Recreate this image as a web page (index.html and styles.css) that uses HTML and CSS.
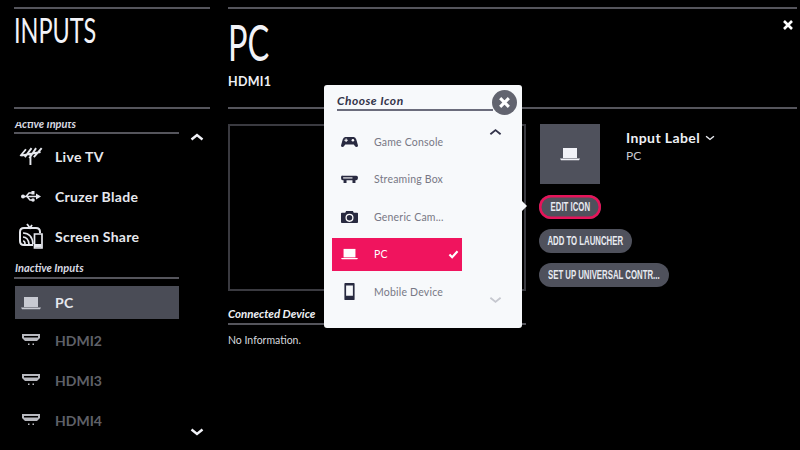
FILE: index.html
```html
<!DOCTYPE html>
<html lang="en">
<head>
    <meta charset="UTF-8">
    <title>Inputs</title>
    <link rel="stylesheet" href="styles.css">
</head>
<body>
    <svg class="defs" width="0" height="0">
        <symbol id="i-laptop" viewBox="0 0 20 14"><path d="M3 1h14v10H3z"/><path d="M0 11.600h20l-1 1.600H1z"/></symbol>
        <symbol id="i-hdmi" viewBox="0 0 20 14"><path d="M1 1h18v4l-3 3H4L1 5z"/><path d="M3 3h14v1.500H3z" fill="#000"/><path d="M7 10.500h1.500V12H7zM11.500 10.500H13V12h-1.500z"/></symbol>
    </svg>

    <aside class="sidebar">
        <header class="side-head">
            <h1>INPUTS</h1>
        </header>
        <div class="side-body">
            <div class="input-list">
                <div class="group-label clipped">Active Inputs</div>
                <div class="row">
                    <svg class="row-icon antenna" viewBox="0 0 21 16"><path d="M1 8 6 2M5 9 11 1M9 10 15 1M13 9 20 1M2 7.500 19 4.500M10 6v10" fill="none" stroke="currentColor" stroke-width="1.700"/></svg>
                    <span>Live TV</span>
                </div>
                <div class="row">
                    <svg class="row-icon usb" viewBox="0 0 20 11"><path d="M1 5.500h15M5 5.500l3-3.500h3M6 5.500l3 3.500h2" fill="none" stroke="currentColor" stroke-width="1.500"/><circle cx="2" cy="5.500" r="2"/><path d="M15 2.500l5 3-5 3z"/><path d="M10.500 0h3v3.500h-3z"/><circle cx="12" cy="9" r="1.800"/></svg>
                    <span>Cruzer Blade</span>
                </div>
                <div class="row">
                    <svg class="row-icon share" viewBox="0 0 24 26"><path d="M8 1l3 4 2-3" fill="none" stroke="currentColor" stroke-width="1.800"/><path d="M14 22H5q-4 0-4-4V9q0-4 4-4h12q4 0 4 4v1" fill="none" stroke="currentColor" stroke-width="2"/><path d="M4 10q9 0 10 11M4 14q5 0 6 7M4 18q2 0 2 3" fill="none" stroke="currentColor" stroke-width="1.700"/><path d="M15.500 11h7.500v14h-7.500z" fill="none" stroke="currentColor" stroke-width="1.700"/><path d="M16 21h6.500v3.500H16z"/></svg>
                    <span>Screen Share</span>
                </div>
                <div class="group-label">Inactive Inputs</div>
                <div class="row selected">
                    <svg class="row-icon"><use href="#i-laptop"/></svg>
                    <span>PC</span>
                </div>
                <div class="row dim">
                    <svg class="row-icon"><use href="#i-hdmi"/></svg>
                    <span>HDMI2</span>
                </div>
                <div class="row dim">
                    <svg class="row-icon"><use href="#i-hdmi"/></svg>
                    <span>HDMI3</span>
                </div>
                <div class="row dim">
                    <svg class="row-icon"><use href="#i-hdmi"/></svg>
                    <span>HDMI4</span>
                </div>
            </div>
            <div class="scroll-col">
                <svg class="chev" viewBox="0 0 14 8"><path d="M1.500 6.500 7 2l5.500 4.500"/></svg>
                <svg class="chev" viewBox="0 0 14 8"><path d="M1.500 1.500 7 6l5.500-4.500"/></svg>
            </div>
        </div>
    </aside>

    <main class="content">
        <header class="content-head">
            <h2>PC</h2>
            <div class="port">HDMI1</div>
        </header>
        <div class="content-body">
            <div class="preview-col">
                <div class="preview"></div>
                <div class="device-label">Connected Device</div>
                <div class="device-info">No Information.</div>
            </div>
            <div class="details">
                <div class="label-row">
                    <div class="thumb"><svg class="thumb-icon"><use href="#i-laptop"/></svg></div>
                    <div class="label-text">
                        <div class="label-title">Input Label <svg class="label-chev" viewBox="0 0 14 8"><path d="M1.500 1.500 7 6l5.500-4.500"/></svg></div>
                        <div class="label-value">PC</div>
                    </div>
                </div>
                <button class="pill pill-edit focused"><span>EDIT ICON</span></button>
                <button class="pill pill-add"><span>ADD TO LAUNCHER</span></button>
                <button class="pill pill-setup"><span>SET UP UNIVERSAL CONTR...</span></button>
            </div>
        </div>
    </main>

    <svg class="close-x" viewBox="0 0 12 12"><path d="M2 2l8 8M10 2l-8 8"/></svg>

    <section class="modal">
        <div class="modal-title">Choose Icon</div>
        <button class="modal-close"><svg viewBox="0 0 12 12"><path d="M2 2l8 8M10 2l-8 8"/></svg></button>
        <div class="modal-body">
            <div class="icon-list">
                <div class="icon-row">
                    <svg class="pick-icon" viewBox="0 0 20 14"><path d="M5 1h10q2 0 3 3l2 7q0 2-2 2-1 0-3-3H5q-2 3-3 3-2 0-2-2l2-7q1-3 3-3z"/><circle cx="14" cy="5" r="1.500" fill="#fff"/><path d="M4 5h4M6 3v4" stroke="#fff" stroke-width="1.200"/></svg>
                    <span>Game Console</span>
                </div>
                <div class="icon-row">
                    <svg class="pick-icon wide" viewBox="0 0 20 9"><path d="M2 0h16q2 0 2 2.500T18 5.500H2Q0 5.500 0 2.500T2 0z"/><path d="M2.500 2h11v1.300h-11z" fill="#fff"/><path d="M3 5h3.500v3.500H3zM13.500 5H17v3.500h-3.500z"/></svg>
                    <span>Streaming Box</span>
                </div>
                <div class="icon-row">
                    <svg class="pick-icon cam" viewBox="0 0 20 16"><path d="M1 3h4l1-2h8l1 2h4q1 0 1 1v10q0 1-1 1H1q-1 0-1-1V4q0-1 1-1z"/><circle cx="10" cy="9" r="4" fill="none" stroke="#fff" stroke-width="1.500"/></svg>
                    <span>Generic Cam...</span>
                </div>
                <div class="icon-row picked">
                    <svg class="pick-icon"><use href="#i-laptop"/></svg>
                    <span>PC</span>
                    <svg class="check" viewBox="0 0 12 10"><path d="M1.500 5 4.500 8 10.500 1.500"/></svg>
                </div>
                <div class="icon-row">
                    <svg class="pick-icon phone" viewBox="0 0 12 20"><path d="M1 0h10q1 0 1 1v18q0 1-1 1H1q-1 0-1-1V1q0-1 1-1zM2 3v12h8V3z" fill-rule="evenodd"/></svg>
                    <span>Mobile Device</span>
                </div>
            </div>
            <div class="modal-scroll">
                <svg class="chev dark" viewBox="0 0 14 8"><path d="M1.500 6.500 7 2l5.500 4.500"/></svg>
                <svg class="chev faint" viewBox="0 0 14 8"><path d="M1.500 1.500 7 6l5.500-4.500"/></svg>
            </div>
        </div>
    </section>
</body>
</html>
```
FILE: styles.css
```css
* {
    box-sizing: border-box;
}
body {
    margin: 0;
    width: 800px;
    height: 450px;
    overflow: hidden;
    position: relative;
    display: flex;
    background: #000;
    color: #eef0f5;
    font-family: Lato, "Open Sans", sans-serif;
}
.defs {
    position: absolute;
}
svg {
    fill: currentColor;
}

/* left column */
.sidebar {
    width: 196px;
    margin-left: 14px;
    flex-shrink: 0;
}
.side-head {
    height: 102px;
    margin-top: 7px;
    border-top: 2px solid #55555c;
    border-bottom: 2px solid #55555c;
}
h1, h2 {
    width: fit-content;
    font-weight: 400;
    color: #f2f3f8;
    transform-origin: left center;
}
h1 {
    margin: 0;
    font-size: 35px;
    line-height: 40px;
    transform: scaleX(0.67);
}
.side-body {
    display: flex;
    height: 341px;
}
.input-list {
    width: 165px;
    padding-top: 8px;
    overflow: hidden;
}
.group-label {
    height: 20px;
    margin-top: 3px;
    padding-left: 1px;
    font-size: 11px;
    font-style: italic;
    font-weight: 700;
    line-height: 18px;
    color: #d8dae2;
    border-bottom: 2px solid #55555c;
}
.group-label.clipped {
    height: 17px;
    margin: 0 0 2px;
    line-height: 13px;
    clip-path: inset(5px 0 0 0);
}
.row {
    height: 40px;
    display: flex;
    align-items: center;
    font-size: 14px;
    font-weight: 700;
    letter-spacing: 0.3px;
    color: #e6e8ee;
}
.row span {
    margin-left: 10px;
}
.row-icon {
    width: 28px;
    height: 14px;
    margin-left: 3px;
    flex-shrink: 0;
}
.row-icon.antenna {
    height: 18px;
}
.row-icon.usb {
    height: 11px;
}
.row-icon.share {
    height: 26px;
}
.row.selected {
    height: 33px;
    margin: 7px 0 1px 1px;
    background: #4a4c56;
}
.row.selected .row-icon {
    margin-left: 2px;
    color: #c8cad2;
}
.row.dim {
    color: #5f6068;
    letter-spacing: 0;
}
.row.dim .row-icon {
    color: #b9bac0;
}
.scroll-col {
    flex: 1;
    display: flex;
    flex-direction: column;
    justify-content: space-between;
    align-items: flex-end;
    padding: 24px 6px 14px 0;
}
.chev {
    width: 14px;
    height: 8px;
    fill: none;
    stroke: #f2f3f8;
    stroke-width: 2.400;
}

/* right column */
.content {
    flex: 1;
    margin: 7px 3px 0 18px;
}
.content-head {
    height: 102px;
    border-top: 2px solid #55555c;
    border-bottom: 2px solid #55555c;
}
h2 {
    margin: 13px 0 0;
    font-size: 50px;
    line-height: 40px;
    transform: scaleX(0.65);
}
.port {
    margin-top: 12px;
    font-size: 12.500px;
    font-weight: 700;
    line-height: 15px;
    letter-spacing: 0.3px;
}
.content-body {
    display: flex;
    padding-top: 15px;
}
.preview-col {
    width: 298px;
}
.preview {
    height: 167px;
    border: 2px solid #3a3a40;
}
.device-label {
    margin-top: 15px;
    padding-bottom: 2px;
    font-size: 11.500px;
    font-style: italic;
    font-weight: 700;
    line-height: 15px;
    border-bottom: 2px solid #55555c;
}
.device-info {
    margin-top: 8px;
    font-size: 10.500px;
    line-height: 14px;
    color: #d6d8de;
}
.details {
    margin-left: 13px;
    display: flex;
    flex-direction: column;
    align-items: flex-start;
}
.label-row {
    display: flex;
    margin: 0 0 11px 1px;
}
.thumb {
    width: 60px;
    height: 60px;
    background: #4f515c;
    display: flex;
    align-items: center;
    justify-content: center;
}
.thumb-icon {
    width: 20px;
    height: 14px;
    color: #f2f3f8;
}
.label-text {
    margin-left: 26px;
    padding-top: 5px;
}
.label-title {
    font-size: 14px;
    font-weight: 700;
    line-height: 17px;
    letter-spacing: 0.4px;
}
.label-chev {
    width: 10px;
    height: 6px;
    margin-left: 1px;
    fill: none;
    stroke: #eef0f5;
    stroke-width: 2;
    vertical-align: 2px;
}
.label-value {
    margin-top: 3px;
    font-size: 12px;
    line-height: 13px;
    color: #c8cad2;
}
.pill {
    height: 24px;
    margin-bottom: 10px;
    padding: 0;
    display: flex;
    align-items: center;
    justify-content: center;
    border: none;
    border-radius: 12px;
    background: #4f515c;
    color: #e8eaf0;
    font-family: "Liberation Sans", sans-serif;
    font-size: 12px;
    font-weight: 700;
    white-space: nowrap;
}
.pill span {
    flex-shrink: 0;
    transform: scaleX(0.65);
}
.pill-edit {
    width: 62px;
}
.pill-add {
    width: 93px;
}
.pill-setup {
    width: 130px;
}
.pill.focused {
    box-shadow: inset 0 0 0 2.500px #e5145a;
}
.close-x {
    position: absolute;
    top: 19px;
    left: 782px;
    width: 12px;
    height: 12px;
    fill: none;
    stroke: #fff;
    stroke-width: 2.600;
}

/* dialog over the page */
.modal {
    position: absolute;
    left: 324px;
    top: 85px;
    width: 198px;
    height: 243px;
    padding: 0 8px;
    background: #f7f9fb;
    border-radius: 3px;
    color: #33344a;
}
.modal::after {
    content: "";
    position: absolute;
    left: 198px;
    top: 116px;
    border: 5px solid transparent;
    border-left-color: #f7f9fb;
}
.modal-title {
    height: 26px;
    margin: 0 21px 0 5px;
    padding-top: 8px;
    font-size: 12px;
    font-style: italic;
    font-weight: 700;
    line-height: 15px;
    letter-spacing: 0.5px;
    border-bottom: 2px solid #6b6c7c;
}
.modal-close {
    position: absolute;
    left: 168px;
    top: 5px;
    width: 25px;
    height: 25px;
    padding: 6px;
    border: none;
    border-radius: 50%;
    background: #62646f;
}
.modal-close svg {
    display: block;
    width: 13px;
    height: 13px;
    fill: none;
    stroke: #fff;
    stroke-width: 2.800;
}
.modal-body {
    display: flex;
    padding-top: 14px;
}
.icon-list {
    width: 130px;
}
.icon-row {
    height: 33px;
    margin-bottom: 4.500px;
    display: flex;
    align-items: center;
    position: relative;
    font-size: 10.500px;
    letter-spacing: 0.2px;
    color: #777885;
}
.icon-row span {
    margin-left: 16px;
}
.pick-icon {
    width: 17px;
    height: 12px;
    margin-left: 9px;
    flex-shrink: 0;
    color: #282a40;
    fill: #282a40;
}
.pick-icon.wide {
    height: 9px;
}
.pick-icon.phone {
    height: 17px;
}
.pick-icon.cam {
    height: 14px;
}
.icon-row.picked {
    background: #f0145e;
    color: #fff;
}
.icon-row.picked .pick-icon {
    color: #fff;
    fill: #fff;
}
.check {
    position: absolute;
    right: 3px;
    top: 12px;
    width: 11px;
    height: 9px;
    fill: none;
    stroke: #fff;
    stroke-width: 2.400;
}
.modal-scroll {
    flex: 1;
    height: 179px;
    display: flex;
    flex-direction: column;
    justify-content: space-between;
    align-items: flex-end;
    padding: 3px 12px 0 0;
}
.chev.dark {
    width: 13px;
    stroke: #33344a;
    stroke-width: 2;
}
.chev.faint {
    width: 13px;
    stroke: #c6c8cf;
    stroke-width: 2;
}
```
